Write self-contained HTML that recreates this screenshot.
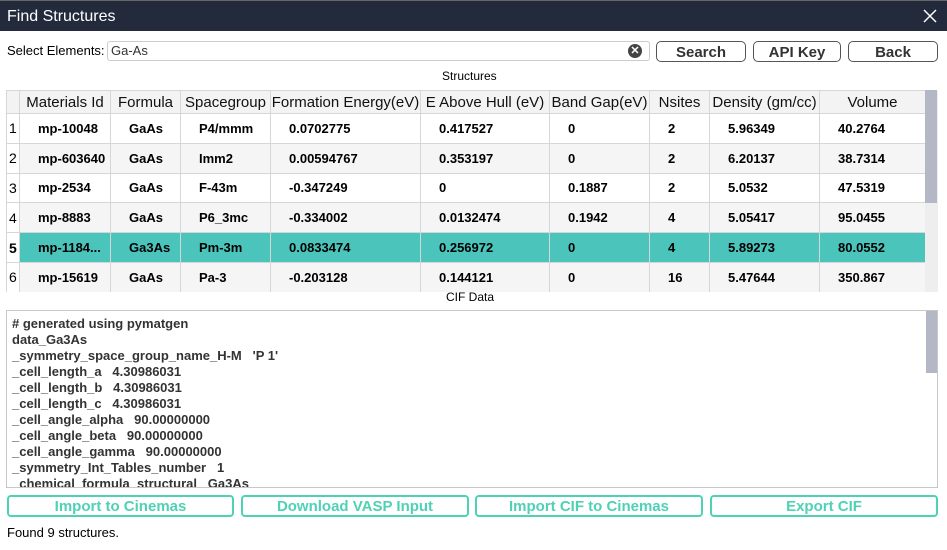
<!DOCTYPE html>
<html><head><style>
*{box-sizing:border-box;margin:0;padding:0}
body{width:947px;height:550px;background:#fff;font-family:"Liberation Sans",sans-serif;position:relative;overflow:hidden;color:#000}
.abs{position:absolute}
.title{left:0;top:0;width:947px;height:31px;background:#232a3b;color:#fff;font-size:16px;line-height:31px;padding-left:7px;border-top:1px solid #666}
.btn{position:absolute;top:41px;height:21px;border:1px solid #555;border-radius:5px;font-weight:bold;font-size:15px;text-align:center;line-height:21px;color:#333;background:#fff}
table{border-collapse:collapse;position:absolute;left:6px;top:90px;table-layout:fixed;font-size:13px}
td,th{border:1px solid #d6d6d6;height:30px;white-space:nowrap;overflow:hidden}
th{font-weight:normal;font-size:15px;height:23px;background:#f3f3f3;color:#111}
td{font-weight:bold;padding-left:18px;height:29.8px}
td.n{padding-left:2px;font-weight:normal;font-size:14px;background:#fff}
tr:nth-child(odd) td{background:#f5f5f5}
tr:nth-child(odd) td.n{background:#fff}
tr.sel td{background:#4bc4bc!important}
tr.sel td.n{background:#fff!important;font-weight:bold}
.cif{left:6px;top:310px;width:932px;height:178px;border:1px solid #c8c8c8;overflow:hidden;padding:5px 0 0 5px;font-weight:bold;font-size:13px;line-height:16px;color:#333;white-space:pre}
.gb{position:absolute;top:495px;height:22px;border:2px solid #4fd1b5;border-radius:4px;color:#4fd1b5;font-weight:bold;font-size:15px;text-align:center;line-height:19px}
</style></head><body>
<div class="abs title">Find Structures<svg style="position:absolute;right:10px;top:8px" width="14" height="14" viewBox="0 0 14 14"><path d="M1 1L13 13M13 1L1 13" stroke="#fff" stroke-width="1.5"/></svg></div>
<div class="abs" style="left:7px;top:43px;font-size:13px">Select Elements:</div>
<div class="abs" style="left:107px;top:41px;width:543px;height:20px;border:1px solid #ccc;border-radius:3px;font-size:13px;line-height:18px;padding-left:3px;color:#333">Ga-As<span style="position:absolute;right:7px;top:2px;width:14px;height:14px;border-radius:50%;background:#444;color:#fff;font-size:11px;line-height:14px;text-align:center;font-weight:bold">✕</span></div>
<div class="btn" style="left:656px;width:90px">Search</div>
<div class="btn" style="left:753px;width:88px">API Key</div>
<div class="btn" style="left:848px;width:90px">Back</div>
<div class="abs" style="left:442px;top:69px;font-size:12px">Structures</div>
<table>
<colgroup><col style="width:13px"><col style="width:91px"><col style="width:70px"><col style="width:90px"><col style="width:150px"><col style="width:129px"><col style="width:100px"><col style="width:60px"><col style="width:110px"><col style="width:106px"></colgroup>
<tr><th></th><th>Materials Id</th><th>Formula</th><th>Spacegroup</th><th>Formation Energy(eV)</th><th>E Above Hull (eV)</th><th>Band Gap(eV)</th><th>Nsites</th><th>Density (gm/cc)</th><th>Volume</th></tr>
<tr><td class="n">1</td><td>mp-10048</td><td>GaAs</td><td>P4/mmm</td><td>0.0702775</td><td>0.417527</td><td>0</td><td>2</td><td>5.96349</td><td>40.2764</td></tr>
<tr><td class="n">2</td><td>mp-603640</td><td>GaAs</td><td>Imm2</td><td>0.00594767</td><td>0.353197</td><td>0</td><td>2</td><td>6.20137</td><td>38.7314</td></tr>
<tr><td class="n">3</td><td>mp-2534</td><td>GaAs</td><td>F-43m</td><td>-0.347249</td><td>0</td><td>0.1887</td><td>2</td><td>5.0532</td><td>47.5319</td></tr>
<tr><td class="n">4</td><td>mp-8883</td><td>GaAs</td><td>P6_3mc</td><td>-0.334002</td><td>0.0132474</td><td>0.1942</td><td>4</td><td>5.05417</td><td>95.0455</td></tr>
<tr class="sel"><td class="n">5</td><td>mp-1184...</td><td>Ga3As</td><td>Pm-3m</td><td>0.0833474</td><td>0.256972</td><td>0</td><td>4</td><td>5.89273</td><td>80.0552</td></tr>
<tr><td class="n">6</td><td>mp-15619</td><td>GaAs</td><td>Pa-3</td><td>-0.203128</td><td>0.144121</td><td>0</td><td>16</td><td>5.47644</td><td>350.867</td></tr>
</table>
<div class="abs" style="left:925px;top:90px;width:13px;height:202px;background:#eee"></div>
<div class="abs" style="left:925px;top:90px;width:12px;height:113px;background:#b4b7c6"></div>
<div class="abs" style="left:0;top:292px;width:947px;height:4px;background:#fff"></div>
<div class="abs" style="left:446px;top:290px;font-size:12px">CIF Data</div>
<div class="abs cif"># generated using pymatgen
data_Ga3As
_symmetry_space_group_name_H-M   'P 1'
_cell_length_a   4.30986031
_cell_length_b   4.30986031
_cell_length_c   4.30986031
_cell_angle_alpha   90.00000000
_cell_angle_beta   90.00000000
_cell_angle_gamma   90.00000000
_symmetry_Int_Tables_number   1
_chemical_formula_structural   Ga3As</div>
<div class="abs" style="left:926px;top:311px;width:11px;height:62px;background:#b4b7c6"></div>
<div class="gb" style="left:7px;width:227px">Import to Cinemas</div>
<div class="gb" style="left:241px;width:228px">Download VASP Input</div>
<div class="gb" style="left:475px;width:228px">Import CIF to Cinemas</div>
<div class="gb" style="left:710px;width:228px">Export CIF</div>
<div class="abs" style="left:7px;top:525px;font-size:13px">Found 9 structures.</div>
</body></html>
